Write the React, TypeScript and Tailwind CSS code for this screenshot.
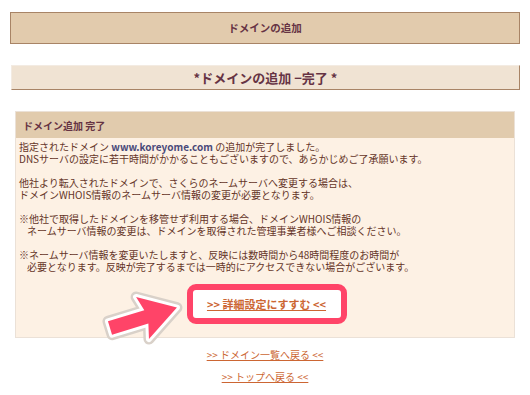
import React from "react";

const jp = { fontFamily: '"Noto Sans CJK JP", "Noto Sans", sans-serif' };

function Arrow() {
  const pts = "0,-7 38,-7 34,-22 70,0 34,22 38,7 0,7";
  return (
    <svg
      className="absolute left-[90px] top-[281px] pointer-events-none"
      width="100"
      height="70"
      viewBox="0 0 100 70"
    >
      <g transform="translate(20,47) rotate(-17)">
        <polygon points={pts} fill="#d9d1c9" stroke="#d9d1c9" strokeWidth="11" strokeLinejoin="round" />
        <polygon points={pts} fill="#ffffff" stroke="#ffffff" strokeWidth="6" strokeLinejoin="round" />
        <polygon points={pts} fill="#ff4468" />
      </g>
    </svg>
  );
}

export default function App() {
  return (
    <div className="relative w-[530px] h-[395px] bg-white overflow-hidden" style={jp}>
      <div className="pt-[12px] pl-[10px] pr-[10px]">
        <div className="h-[32px] border border-[#a88466] bg-[#e2cbad] flex items-center justify-center text-[10.5px] font-bold text-[#663344]">
          ドメインの追加
        </div>
      </div>

      <div className="mt-[21px] ml-[11px] mr-[10px] h-[25px] bg-[#f0e3d3] border-t border-l border-t-[#f3ebe2] border-l-[#f3ebe2] border-b border-r border-b-[#a88466] border-r-[#a88466] flex items-center justify-center text-[13px] font-bold text-[#663344]">
        *ドメインの追加 −完了 *
      </div>

      <div className="mt-[21px] ml-[15px] w-[500px] border border-[#ebe1d7]">
        <div className="h-[26px] bg-[#e1cbad] pl-[7px] flex items-center text-[10px] font-bold text-[#663344]">
          ドメイン追加 完了
        </div>
        <div className="bg-[#fdf1e4] pt-[3px] pl-[3px] pb-[13px] text-[10px] leading-[12px] text-[#653528]">
          <div>
            指定されたドメイン <span className="font-bold text-[#4a4a7a]">www.koreyome.com</span> の追加が完了しました。
            <br />
            DNSサーバの設定に若干時間がかかることもございますので、あらかじめご了承願います。
          </div>
          <div className="mt-[12px]">
            他社より転入されたドメインで、さくらのネームサーバへ変更する場合は、
            <br />
            ドメインWHOIS情報のネームサーバ情報の変更が必要となります。
          </div>
          <div className="mt-[12px]">
            ※他社で取得したドメインを移管せず利用する場合、ドメインWHOIS情報の
            <br />
            <span className="inline-block w-[8px]" />
            ネームサーバ情報の変更は、ドメインを取得された管理事業者様へご相談ください。
          </div>
          <div className="mt-[12px]">
            ※ネームサーバ情報を変更いたしますと、反映には数時間から48時間程度のお時間が
            <br />
            <span className="inline-block w-[8px]" />
            必要となります。反映が完了するまでは一時的にアクセスできない場合がございます。
          </div>
          <div className="mt-[11px] flex justify-center">
            <div className="w-[160px] h-[40px] border-[6px] border-[#ff4468] rounded-[9px] bg-white flex items-center justify-center">
              <a className="text-[11px] font-bold text-[#cc6633] underline">
                &gt;&gt; 詳細設定にすすむ &lt;&lt;
              </a>
            </div>
          </div>
        </div>
      </div>

      <div className="mt-[10px] flex flex-col items-center gap-[9px] text-[10px] leading-[13px] text-[#cc6633]">
        <a className="underline">&gt;&gt; ドメイン一覧へ戻る &lt;&lt;</a>
        <a className="underline">&gt;&gt; トップへ戻る &lt;&lt;</a>
      </div>

      <Arrow />
    </div>
  );
}
